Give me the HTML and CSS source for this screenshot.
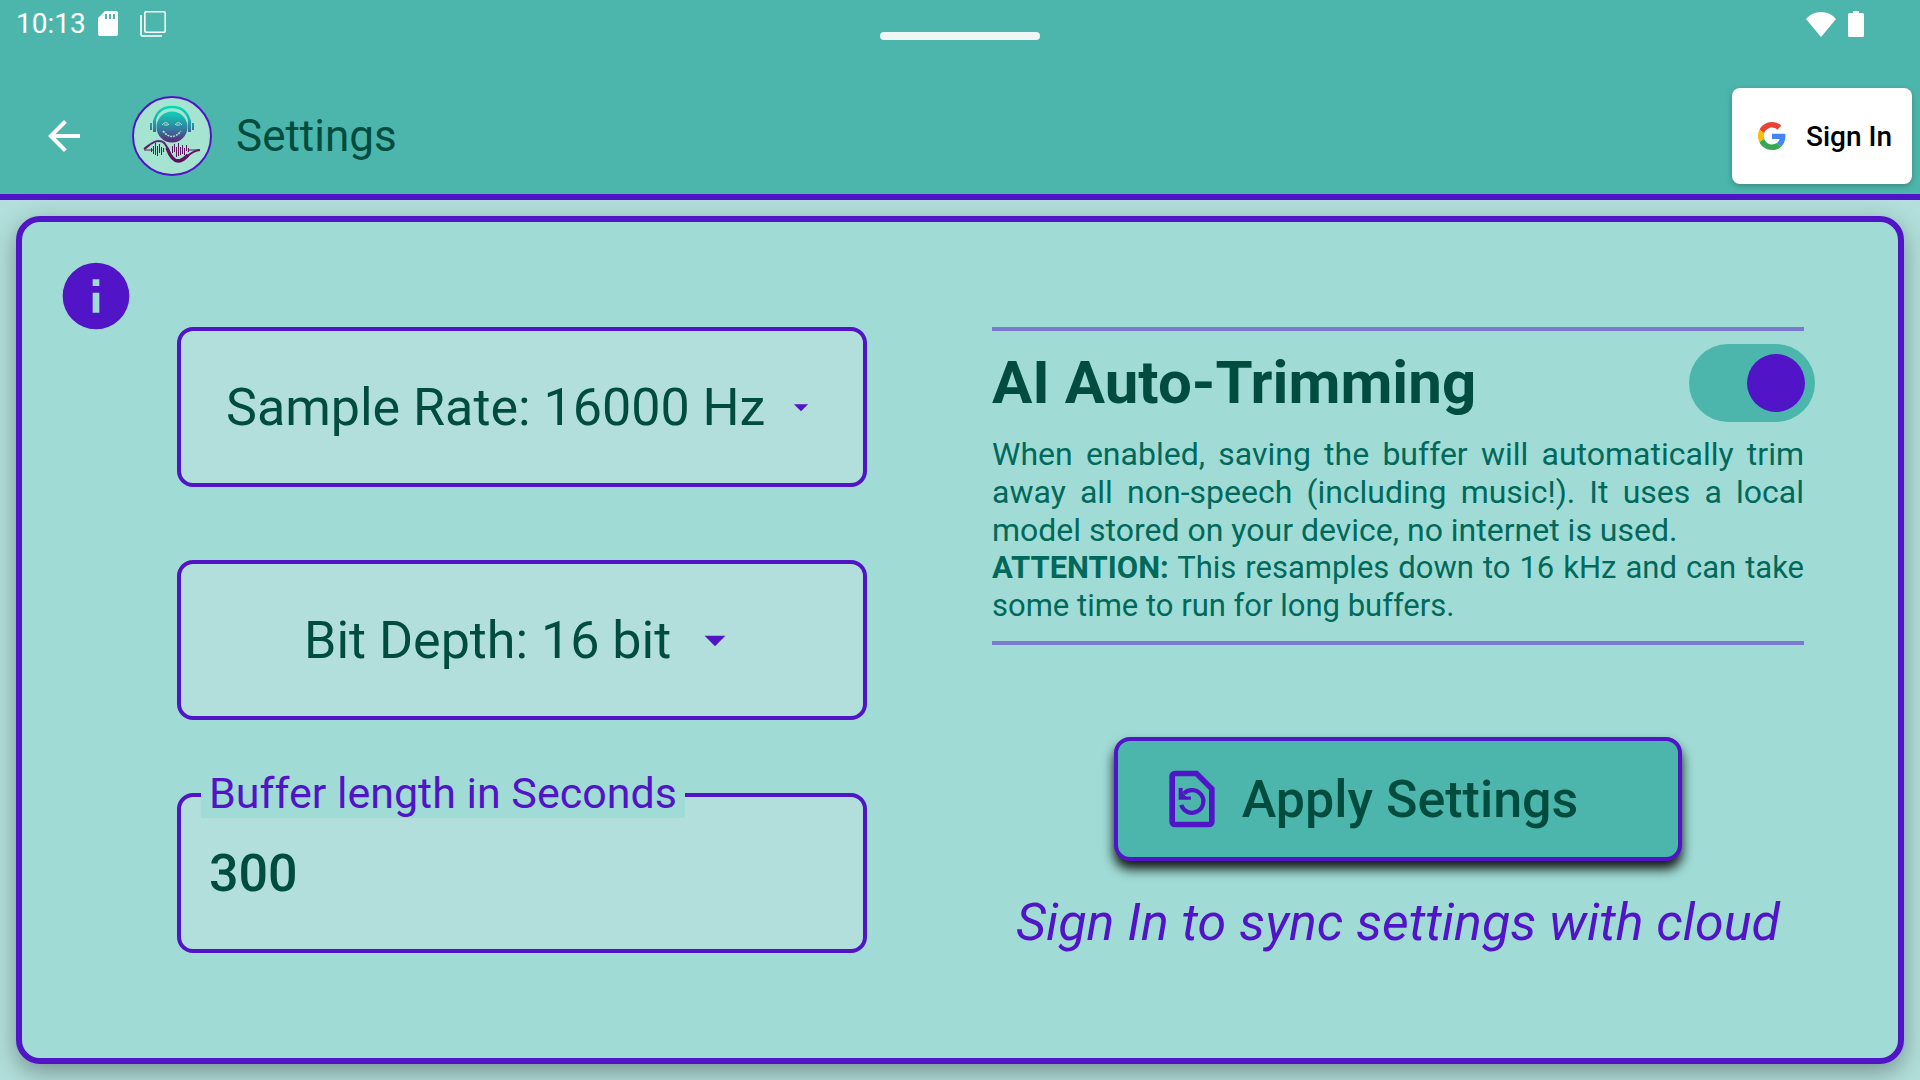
FILE: index.html
```html
<!DOCTYPE html>
<html lang="en">
<head>
<meta charset="utf-8">
<meta name="viewport" content="width=device-width, initial-scale=1">
<title>Settings</title>
<link rel="stylesheet" href="styles.css">
</head>
<body>
<header class="app-header">
  <div class="status-bar">
    <div class="status-group">
      <span class="clock">10:13</span>
      <svg class="sd-icon" viewBox="0 0 20 26" aria-hidden="true"><path fill="#fff" fill-rule="evenodd" d="M7 0h11a2 2 0 0 1 2 2v21a2 2 0 0 1-2 2H2a2 2 0 0 1-2-2V7zM7 3v5h2V3zm4 0v5h2V3zm4 0v5h2V3z"/></svg>
      <svg class="copy-icon" viewBox="0 0 26 26" aria-hidden="true"><path fill="none" stroke="#fff" stroke-width="1.6" d="M6 .8h18a1.2 1.2 0 0 1 1.2 1.2v18a1.2 1.2 0 0 1-1.2 1.2H6A1.2 1.2 0 0 1 4.800 20V2A1.200 1.200 0 0 1 6 .8zM1 4v19.500a1.500 1.500 0 0 0 1.500 1.500H22"/></svg>
    </div>
    <div class="status-group status-right">
      <svg class="wifi-icon" viewBox="0 0 30 25" aria-hidden="true"><path fill="#fff" d="M15 25 0 7Q6 0 15 0t15 7z"/></svg>
      <svg class="battery-icon" viewBox="0 0 16 26" aria-hidden="true"><path fill="#fff" d="M5 0h6v2h3.500A1.500 1.500 0 0 1 16 3.500v21a1.500 1.500 0 0 1-1.500 1.500h-13A1.500 1.500 0 0 1 0 24.500v-21A1.500 1.500 0 0 1 1.500 2H5z"/></svg>
    </div>
    <span class="drag-handle"></span>
  </div>
  <div class="toolbar">
    <button class="back-button" type="button" aria-label="Back">
      <svg viewBox="4 4 16 16" aria-hidden="true"><path fill="#fff" d="M20 11H7.830l5.590-5.590L12 4l-8 8 8 8 1.410-1.410L7.830 13H20z"/></svg>
    </button>
    <svg class="logo" viewBox="0 0 80 80" aria-hidden="true">
      <defs>
        <linearGradient id="ink" gradientUnits="userSpaceOnUse" x1="0" y1="10" x2="0" y2="66">
          <stop offset="0" stop-color="#00dcb8"/>
          <stop offset=".15" stop-color="#14c4b4"/>
          <stop offset=".4" stop-color="#3180a0"/>
          <stop offset=".6" stop-color="#553580"/>
          <stop offset=".75" stop-color="#60195f"/>
          <stop offset="1" stop-color="#600d60"/>
        </linearGradient>
      </defs>
      <circle cx="40" cy="40" r="39" fill="#a6e4d2" stroke="#5214c7" stroke-width="2"/>
      <circle cx="40" cy="31" r="15.500" fill="url(#ink)"/>
      <g fill="none" stroke="url(#ink)">
        <path stroke-width="2.500" d="M22 27C24 16 31 11 40 11s16 5 18 16"/>
        <path stroke-width="3" d="M22.500 24.500V36M57.500 24.500V36"/>
        <path stroke-width="2" d="M19 27v7M61 27v7"/>
        <path stroke-width="2" d="M12 53C17 50 20 45 27 45S35 52 38 58s7 8 13 5 8-8 17-9"/>
        <path stroke-width="3.500" d="M35 52c3 8 6 13 11 13s7-3 10-6"/>
        <path stroke-width="1" d="M12 54h10M19.500 52v4M21.500 50v8M23.500 47v12M25.500 50v10M27.500 48v9M29.500 51v8M31.500 52v4M40.500 50v7M42.500 48v8M44.500 51v10M46.500 47v13M48.500 51v8M50.500 49v9M52.500 52v7M54.500 49v6M56.500 52v4M56 54h12"/>
      </g>
      <g fill="none" stroke="#a6e4d2" stroke-width="1">
        <path d="M30 29q4-5 7 0M43 29q3-5 7 0M32 29h4M44 29h4"/>
        <path stroke-width="1.600" stroke-dasharray="2 1" d="M31 35q9 11 18 0"/>
      </g>
    </svg>
    <h1 class="page-title">Settings</h1>
    <button class="sign-in" type="button">
      <svg viewBox="0 0 48 48" aria-hidden="true">
        <path fill="#ea4335" d="M24 9.500c3.540 0 6.710 1.220 9.210 3.600l6.850-6.850C35.900 2.380 30.470 0 24 0 14.620 0 6.510 5.380 2.560 13.220l7.980 6.190C12.430 13.720 17.740 9.500 24 9.500z"/>
        <path fill="#4285f4" d="M46.980 24.550c0-1.570-.15-3.090-.38-4.550H24v9.020h12.940c-.58 2.960-2.260 5.480-4.780 7.180l7.730 6c4.510-4.180 7.090-10.360 7.090-17.650z"/>
        <path fill="#fbbc05" d="M10.530 28.590A14.500 14.500 0 0 1 9.770 24c0-1.600.27-3.140.76-4.590l-7.980-6.190A24 24 0 0 0 0 24c0 3.880.92 7.540 2.560 10.780z"/>
        <path fill="#34a853" d="M24 48c6.480 0 11.930-2.130 15.890-5.810l-7.730-6c-2.150 1.450-4.920 2.300-8.160 2.300-6.260 0-11.570-4.220-13.470-9.910l-7.980 6.190C6.510 42.620 14.620 48 24 48z"/>
      </svg>
      <span>Sign In</span>
    </button>
  </div>
</header>

<main class="page">
  <section class="card">
    <button class="info-button" type="button" aria-label="Information">
      <svg viewBox="0 0 24 24" aria-hidden="true"><path fill="#5214c7" d="M12 2a10 10 0 1 0 0 20 10 10 0 0 0 0-20zm1 15h-2v-6h2zm0-8h-2V7h2z"/></svg>
    </button>
    <div class="columns">
      <div class="fields">
        <div class="field">
          <select aria-label="Sample rate">
            <option>Sample Rate: 16000 Hz</option>
            <option>Sample Rate: 8000 Hz</option>
          </select>
          <svg class="arrow-small" viewBox="0 0 24 24" aria-hidden="true"><path fill="#5214c7" d="m7 10 5 5 5-5z"/></svg>
        </div>
        <div class="field">
          <select aria-label="Bit depth">
            <option>Bit Depth: 16 bit</option>
            <option>Bit Depth: 8 bit</option>
          </select>
          <svg class="arrow-large" viewBox="0 0 24 24" aria-hidden="true"><path fill="#5214c7" d="m7 10 5 5 5-5z"/></svg>
        </div>
        <div class="field">
          <label class="field-label" for="buffer">Buffer length in Seconds</label>
          <input class="field-input" id="buffer" type="text" inputmode="numeric" value="300">
        </div>
      </div>
      <div class="options">
        <div class="trimming">
          <div class="trimming-head">
            <label class="trimming-title" for="trim">AI Auto-Trimming</label>
            <input class="switch" id="trim" type="checkbox" role="switch" checked>
          </div>
          <p class="trimming-text">When enabled, saving the buffer will automatically trim away all non-speech (including music!). It uses a local model stored on your device, no internet is used.</p>
          <p class="trimming-text trimming-warning"><b>ATTENTION:</b> This resamples down to 16 kHz and can take some time to run for long buffers.</p>
        </div>
        <button class="apply" type="button">
          <svg viewBox="0 0 24 24" aria-hidden="true">
            <path fill="#5214c7" fill-rule="evenodd" d="M14 2H6a2 2 0 0 0-2 2v16a2 2 0 0 0 2 2h12a2 2 0 0 0 2-2V8zm4 18H6V4h7.170L18 8.830z"/>
            <path fill="none" stroke="#5214c7" stroke-width="1.500" d="M8.200 14.100a4 4 0 1 0 .9-4"/>
            <path fill="#5214c7" d="M7.300 8.100v4.200h4.300v-1.200H9.900L8.700 9.700V8.100z"/>
          </svg>
          <span>Apply Settings</span>
        </button>
        <p class="sync-note">Sign In to sync settings with cloud</p>
      </div>
    </div>
  </section>
</main>
</body>
</html>
```
FILE: styles.css
```css
:root {
  --teal: #4db6ac;
  --purple: #5214c7;
  --ink: #004d40;
  --card: #a0dcd5;
  --pale: #b2dfdb;
}

* {
  box-sizing: border-box;
}

body {
  margin: 0;
  min-height: 100vh;
  display: flex;
  flex-direction: column;
  background: var(--pale);
  color: var(--ink);
  font-family: Roboto, "Noto Sans", sans-serif;
}

button,
input,
select {
  font: inherit;
  color: inherit;
  margin: 0;
}

svg {
  display: block;
  flex: none;
}

/* Header */
.app-header {
  background: var(--teal);
  border-bottom: 6px solid var(--purple);
}

.status-bar {
  position: relative;
  display: flex;
  justify-content: space-between;
  align-items: center;
  height: 48px;
  padding: 0 56px 0 16px;
  color: #fff;
}

.status-group {
  display: flex;
  align-items: center;
  gap: 12px;
}

.clock {
  font-size: 28px;
  line-height: 32px;
}

.sd-icon {
  width: 20px;
  height: 26px;
}

.copy-icon {
  width: 26px;
  height: 26px;
  margin-left: 10px;
}

.wifi-icon {
  width: 30px;
  height: 25px;
}

.battery-icon {
  width: 16px;
  height: 26px;
}

.drag-handle {
  position: absolute;
  top: 32px;
  left: 50%;
  width: 160px;
  height: 8px;
  margin-left: -80px;
  border-radius: 4px;
  background: #eef7f6;
}

.toolbar {
  display: flex;
  align-items: center;
  padding: 40px 8px 10px 32px;
}

.back-button {
  padding: 16px;
  border: 0;
  background: none;
}

.back-button svg {
  width: 32px;
  height: 32px;
}

.logo {
  width: 80px;
  height: 80px;
  margin-left: 36px;
}

.page-title {
  margin: 0 auto 0 24px;
  font-size: 44px;
  line-height: 52px;
  font-weight: 400;
}

.sign-in {
  display: flex;
  align-items: center;
  gap: 20px;
  height: 96px;
  padding: 0 20px 0 26px;
  border: 0;
  border-radius: 8px;
  background: #fff;
  color: #000;
  font-size: 28px;
  font-weight: 500;
  box-shadow: 0 2px 6px rgba(0, 0, 0, 0.25);
}

.sign-in svg {
  width: 28px;
  height: 30px;
}

/* Card */
.page {
  flex: 1;
  display: flex;
  padding: 16px;
}

.card {
  flex: 1;
  display: grid;
  grid-template-columns: 80px 1fr;
  gap: 41px;
  padding: 34px 94px 34px 34px;
  border: 6px solid var(--purple);
  border-radius: 24px;
  background: var(--card);
  box-shadow: 0 8px 24px rgba(0, 0, 0, 0.34);
}

.info-button {
  align-self: start;
  padding: 0;
  border: 0;
  background: none;
}

.info-button svg {
  width: 80px;
  height: 80px;
}

.columns {
  align-self: center;
  display: grid;
  grid-template-columns: 690fr 812fr;
  gap: 125px;
}

.fields {
  display: flex;
  flex-direction: column;
  gap: 73px;
}

.field {
  position: relative;
  display: flex;
  align-items: center;
  justify-content: center;
  gap: 18px;
  height: 160px;
  border: 4px solid var(--purple);
  border-radius: 16px;
  background: var(--pale);
  font-size: 52px;
}

.field select {
  appearance: none;
  padding: 0;
  border: 0;
  background: none;
}

.arrow-small {
  width: 34px;
  height: 34px;
}

.arrow-large {
  width: 50px;
  height: 50px;
}

.field-label {
  position: absolute;
  top: -29px;
  left: 20px;
  padding: 0 8px;
  background: var(--card);
  color: var(--purple);
  font-size: 43px;
  line-height: 50px;
}

.field-input {
  width: 100%;
  height: 100%;
  padding: 0 28px;
  border: 0;
  outline: 0;
  background: none;
  font-weight: 500;
}

/* Options */
.options {
  display: flex;
  flex-direction: column;
  align-items: center;
}

.trimming {
  width: 100%;
  padding-bottom: 16px;
  border-top: 4px solid #7b79d0;
  border-bottom: 4px solid #7b79d0;
}

.trimming-head {
  display: flex;
  align-items: center;
  justify-content: space-between;
  padding: 13px 0;
  margin-right: -11px;
}

.trimming-title {
  font-size: 60px;
  line-height: 70px;
  font-weight: 700;
}

.switch {
  appearance: none;
  display: flex;
  justify-content: flex-end;
  width: 126px;
  height: 78px;
  padding: 10px;
  border-radius: 39px;
  background: var(--teal);
}

.switch::before {
  content: "";
  width: 58px;
  height: 58px;
  border-radius: 50%;
  background: var(--purple);
}

.switch:not(:checked) {
  justify-content: flex-start;
}

.trimming-text {
  margin: 0;
  color: #00695c;
  font-size: 32px;
  line-height: 38px;
  text-align: justify;
}

.trimming-warning {
  font-size: 31px;
}

.apply {
  display: flex;
  align-items: center;
  gap: 16px;
  width: 70%;
  height: 124px;
  margin-top: 92px;
  padding: 0 40px;
  border: 4px solid var(--purple);
  border-radius: 16px;
  background: var(--teal);
  font-size: 52px;
  font-weight: 500;
  box-shadow: 0 8px 12px rgba(0, 0, 0, 0.9);
}

.apply svg {
  width: 68px;
  height: 68px;
}

.sync-note {
  margin: 32px 0 0;
  color: var(--purple);
  font-size: 52px;
  line-height: 60px;
  font-style: italic;
}
```
